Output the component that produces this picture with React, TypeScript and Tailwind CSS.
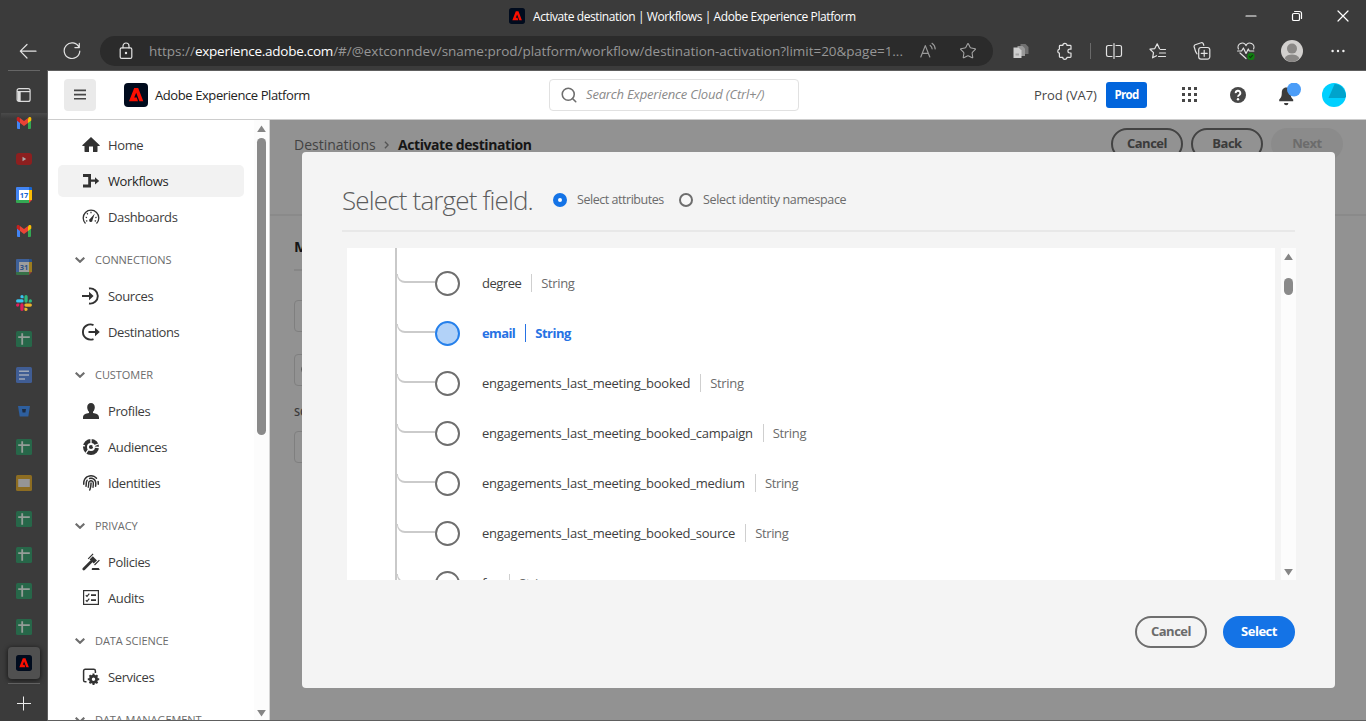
import type { ReactNode } from "react";
import { Search, Star } from "lucide-react";
import { FaFingerprint } from "react-icons/fa6";

function AdobeMark({ className }: { className: string }) {
  return (
    <svg viewBox="0 0 24 24" className={className}>
      <rect width="24" height="24" rx="4" fill="#000b1d" />
      <path d="M5 18.3 10.2 4.9h4L19.3 18.3h-3.9L12.2 9.8 10.2 14.6h2.6L14 18.3Z" fill="#fa0f00" />
    </svg>
  );
}

/* ---------- browser chrome ---------- */

function ToolIcon({ children, className = "w-[44px]" }: { children: ReactNode; className?: string }) {
  return <span className={`flex h-full shrink-0 items-center justify-center ${className}`}>{children}</span>;
}

function Line({ children, className = "size-[18px]" }: { children: ReactNode; className?: string }) {
  return (
    <svg viewBox="0 0 18 18" className={className} fill="none" stroke="currentColor" strokeWidth="1.2" strokeLinecap="round" strokeLinejoin="round">
      {children}
    </svg>
  );
}

function TitleBar() {
  return (
    <div className="flex h-8 shrink-0 items-center text-white">
      <div className="flex w-[1228px] items-center gap-2 pl-[509px]">
        <AdobeMark className="size-4" />
        <span className="whitespace-nowrap pt-px text-[12px] tracking-[-0.41px]">
          Activate destination | Workflows | Adobe Experience Platform
        </span>
      </div>
      <ToolIcon className="w-[46px]">
        <Line><path d="M4 9h10" /></Line>
      </ToolIcon>
      <ToolIcon className="w-[46px]">
        <Line>
          <rect x="4.5" y="6.5" width="7" height="7" rx="1.3" />
          <path d="M6.6 4.5h4.9a2 2 0 0 1 2 2v4.9" />
        </Line>
      </ToolIcon>
      <ToolIcon className="w-[46px]">
        <Line><path d="m4 4 10 10M14 4 4 14" /></Line>
      </ToolIcon>
    </div>
  );
}

function AddressBar() {
  return (
    <div className="flex h-[38px] shrink-0 items-center text-[#e3e3e3]">
      <ToolIcon className="w-[56px]">
        <Line><path d="M17 9.2H1.5M8 2.5 1.3 9.2 8 16" /></Line>
      </ToolIcon>
      <ToolIcon className="w-[32px]">
        <Line><path d="M16 5.2A7.8 7.8 0 1 0 16.8 9M16.3 1.4v4.2h-4.4" /></Line>
      </ToolIcon>
      <div className="ml-3 flex h-[30px] w-[893px] items-center rounded-full bg-[#2b2b2b]">
        <ToolIcon className="w-[49px] pl-[3px]">
          <Line>
            <rect x="3.2" y="5.8" width="11.6" height="10.6" rx="1.5" />
            <path d="M6 5.8V4a3 3 0 0 1 6 0v1.8" />
            <circle cx="9" cy="11" r=".6" fill="currentColor" />
          </Line>
        </ToolIcon>
        <span className="w-[756px] shrink-0 whitespace-nowrap text-[13.5px] tracking-[-0.02px] text-[#969696]">
          https://<span className="tracking-[-0.25px] text-white">experience.adobe.com</span>
          /#/@extconndev/sname:prod/platform/workflow/destination-activation?limit=20&amp;page=1...
        </span>
        <ToolIcon className="w-[46px] text-[#9a9a9a]">
          <Line>
            <path d="M1.8 15 6.3 3.6 10.8 15M3.3 11.3h6M11.2 3.4c1.2.9 1.8 2 1.9 3.4M13 1.3c2 1.3 3 3.2 3.2 5.6" />
          </Line>
        </ToolIcon>
        <ToolIcon className="w-[34px] text-[#a6a6a6]">
          <Star className="size-[18px]" strokeWidth={1.4} />
        </ToolIcon>
      </div>
      <ToolIcon className="ml-[6px] w-[44px]">
        <svg viewBox="0 0 18 18" className="size-[18px]">
          <path d="M8.5 2h5L16.5 5v7h-8Z" fill="#707070" />
          <path d="M5.5 4h5l2.5 2.5V14H5.5Z" fill="#989898" />
          <path d="M1.5 5.5h5L9.5 8.5V16h-8Z" fill="#cfcfcf" />
          <path d="M3.5 11.5h3.5v2H3.500Z" fill="#a5a5a5" />
        </svg>
      </ToolIcon>
      <ToolIcon>
        <Line>
          <path d="M6.8 3.400a2.100 2.100 0 0 1 4.200 0h3.200c.5 0 .8.3.8.8v3h-1.200a1.900 1.900 0 0 0 0 3.800H15v3.500c0 .5-.3.800-.8.800H11a2.100 2.100 0 0 1-4.200 0H4.200a.8.8 0 0 1-.8-.8V11.200a2.100 2.100 0 0 1 0-4.100V4.200c0-.5.3-.8.8-.8Z" />
        </Line>
      </ToolIcon>
      <span className="ml-[3px] h-4 w-px bg-[#6a6a6a]" />
      <ToolIcon className="ml-[1px] w-[44px]">
        <Line>
          <path d="M7 3.5H3.2A1.7 1.7 0 0 0 1.5 5.2v7.6a1.7 1.7 0 0 0 1.7 1.7H7M11 3.5h3.8a1.7 1.7 0 0 1 1.7 1.7v7.6a1.7 1.7 0 0 1-1.7 1.7H11M9 1.5v15" />
        </Line>
      </ToolIcon>
      <ToolIcon>
        <Line>
          <path d="M10.5 6.8 8.2 1.8 5.8 6.600 1 7.200l3.500 3.400-.9 5.200 3.900-2.100M11.500 7.500h5M10.500 11h6M9.500 14.500h7" />
        </Line>
      </ToolIcon>
      <ToolIcon>
        <Line>
          <path d="M4 11.800C2.800 10.500 1.800 7.500 1.200 5a1.700 1.700 0 0 1 1-2.200l6-2a1.700 1.700 0 0 1 2.100 1l.5 1.600" />
          <path d="M8 5.500h6.500a2.300 2.300 0 0 1 2.300 2.300v7a2.300 2.300 0 0 1-2.300 2.300H8a2.300 2.300 0 0 1-2.300-2.300v-7A2.300 2.300 0 0 1 8 5.500Z" />
          <path d="M11.200 8.300v6M8.200 11.300h6" />
        </Line>
      </ToolIcon>
      <ToolIcon>
        <Line>
          <path d="M1.400 7A4 4 0 0 1 9 3.600 4 4 0 0 1 16.600 7M3 11l6 5.500M.6 9h4l1.800-3 2.600 5.500L11.300 7l1 2h4.500" />
          <circle cx="14" cy="14.500" r="3.700" fill="#107c10" stroke="none" />
          <path d="m12.500 14.600 1 1 2-2.200" stroke="#0b3d0b" />
        </Line>
      </ToolIcon>
      <ToolIcon className="w-[48px]">
        <svg viewBox="0 0 22 22" className="size-[22px]">
          <circle cx="11" cy="11" r="11" fill="#d2d0ce" />
          <circle cx="11" cy="8.600" r="5" fill="#8a8886" />
          <path d="M3.600 18.200c1.500-2.700 4.300-3.700 7.400-3.700s5.900 1 7.400 3.700A11 11 0 0 1 11 22a11 11 0 0 1-7.400-3.800Z" fill="#8a8886" />
        </svg>
      </ToolIcon>
      <ToolIcon className="w-[44px]">
        <svg viewBox="0 0 18 18" className="size-[18px]" fill="#f0f0f0">
          <circle cx="3.600" cy="9" r="1.200" /><circle cx="9" cy="9" r="1.200" /><circle cx="14.400" cy="9" r="1.200" />
        </svg>
      </ToolIcon>
    </div>
  );
}

/* ---------- vertical tabs ---------- */

function Gmail() {
  return (
    <svg viewBox="0 0 16 12" className="h-3 w-4">
      <path d="M1 2v9a1 1 0 0 0 1 1h2V4.500Z" fill="#4285f4" />
      <path d="M15 2v9a1 1 0 0 1-1 1h-2V4.500Z" fill="#34a853" />
      <path d="M12 1.500V6l3.300-2.600V1.600C15.300.2 13.700-.4 12.600.6Z" fill="#fbbc04" />
      <path d="M4 6V1L8 4l4-3v5L8 9Z" fill="#ea4335" />
      <path d="M.7 1.600v1.800L4 6V1.200L3.400.6C2.300-.4.700.2.700 1.600Z" fill="#c5221f" />
    </svg>
  );
}

function YouTube() {
  return (
    <svg viewBox="0 0 16 12" className="h-3 w-4">
      <rect width="16" height="12" rx="3" fill="#8d1f1f" />
      <path d="M6.500 3.800v4.400L10.200 6Z" fill="#a9a9a9" />
    </svg>
  );
}

function Calendar({ day, dim = false }: { day: string; dim?: boolean }) {
  return (
    <svg viewBox="0 0 16 16" className={dim ? "size-4 opacity-50" : "size-4"}>
      <path d="M1 0h12v3H3v10H0V1a1 1 0 0 1 1-1Z" fill="#4285f4" />
      <path d="M13 0h2a1 1 0 0 1 1 1v2h-3Z" fill="#1967d2" />
      <path d="M13 3h3v10h-3Z" fill="#fbbc04" />
      <path d="M0 13h13v3H1a1 1 0 0 1-1-1Z" fill="#34a853" />
      <path d="M13 13h3l-3 3Z" fill="#ea4335" />
      <path d="M3 3h10v10H3Z" fill="#fff" />
      <text x="8" y="10.800" textAnchor="middle" fontSize="7.500" fontWeight="700" fill="#1a67d2">{day}</text>
    </svg>
  );
}

function Slack() {
  return (
    <svg viewBox="0 0 16 16" className="size-4">
      <path d="M6 0a1.600 1.600 0 0 0 0 3.300h1.600V1.600A1.600 1.600 0 0 0 6 0ZM1.700 4.300a1.600 1.600 0 0 0 0 3.300H6a1.600 1.600 0 0 0 0-3.300Z" fill="#36c5f0" />
      <path d="M16 6a1.600 1.600 0 0 0-3.300 0v1.600h1.700A1.600 1.600 0 0 0 16 6Zm-4.300 0V1.700a1.600 1.600 0 0 0-3.300 0V6a1.600 1.600 0 0 0 3.300 0Z" fill="#2eb67d" />
      <path d="M10 16a1.600 1.600 0 0 0 0-3.300H8.400v1.700A1.600 1.600 0 0 0 10 16Zm0-4.300h4.300a1.600 1.600 0 0 0 0-3.300H10a1.600 1.600 0 0 0 0 3.300Z" fill="#ecb22e" />
      <path d="M0 10a1.600 1.600 0 0 0 3.300 0V8.400H1.700A1.600 1.600 0 0 0 0 10Zm4.300 0v4.300a1.600 1.600 0 0 0 3.300 0V10a1.600 1.600 0 0 0-3.300 0Z" fill="#e01e5a" />
    </svg>
  );
}

function Sheets() {
  return (
    <svg viewBox="0 0 16 16" className="size-4">
      <rect width="16" height="16" rx="1.500" fill="#276749" />
      <path d="M2.200 6.200h11.600M6.200 2.200v11.600" stroke="#959d98" strokeWidth="1.800" />
    </svg>
  );
}

function Docs() {
  return (
    <svg viewBox="0 0 16 16" className="size-4">
      <rect width="16" height="16" rx="1.500" fill="#405d94" />
      <path d="M3 4.300h10M3 8h10M3 12h6" stroke="#9ea7b8" strokeWidth="1.600" />
    </svg>
  );
}

function Bucket() {
  return (
    <svg viewBox="0 0 16 16" className="size-4">
      <path d="M2 3h12l-1.700 10.500H3.700Z" fill="#2e5f9e" />
      <path d="M6 6h4l-.6 3.600H6.600Z" fill="#1e2c40" />
    </svg>
  );
}

function Slides() {
  return (
    <svg viewBox="0 0 16 16" className="size-4">
      <rect width="16" height="16" rx="1.500" fill="#8d6d22" />
      <rect x="2.200" y="4" width="11.600" height="8" fill="#959595" />
    </svg>
  );
}

const tabs: ReactNode[] = [
  <YouTube />, <Calendar day="17" />, <Gmail />, <Calendar day="31" dim />, <Slack />, <Sheets />, <Docs />,
  <Bucket />, <Sheets />, <Slides />, <Sheets />, <Sheets />, <Sheets />, <Sheets />,
];

function TabStrip() {
  return (
    <div className="flex w-[47px] shrink-0 flex-col items-center pl-px text-[#dcdcdc]">
      <div className="flex h-[43px] w-full shrink-0 flex-col items-center">
        <span className="h-px w-8 shrink-0 bg-[#666]" />
        <span className="mt-4 flex h-4 shrink-0 items-center">
          <svg viewBox="0 0 16 16" className="size-4" fill="none" stroke="currentColor" strokeWidth="1.200">
            <rect x="1.100" y="1.600" width="13" height="12.800" rx="2" />
            <path d="M1 4.600h13" />
            <path d="M1.600 5v8.500c0 .5.300.8.800.8h2.300V5Z" fill="currentColor" stroke="none" />
          </svg>
        </span>
      </div>
      <div className="flex h-7 w-full shrink-0 items-center justify-center bg-linear-to-b from-[#4a4a4a] from-0% to-[#3b3b3b] to-20% pb-2"><Gmail /></div>
      {tabs.map((tab, i) => (
        <div key={i} className="flex h-9 shrink-0 items-center">{tab}</div>
      ))}
      <div className="mt-[2px] flex size-8 shrink-0 items-center justify-center rounded-[4px] bg-[#505050] shadow-[0_1px_4px_1px_rgba(0,0,0,0.5)]">
        <AdobeMark className="size-4" />
      </div>
      <span className="mt-1 h-px w-8 shrink-0 bg-[#606060]" />
      <span className="mt-[11px] flex h-4 items-center">
        <svg viewBox="0 0 16 16" className="size-4" stroke="#ececec" strokeWidth="1"><path d="M1 8.500h14M7.500 1.500v14" /></svg>
      </span>
    </div>
  );
}

/* ---------- application header ---------- */

function AppHeader() {
  return (
    <header className="flex h-[49px] shrink-0 items-center border-b border-[#cdcdcd] bg-white">
      <span className="ml-4 flex size-8 items-center justify-center rounded-[4px] bg-[#eaeaea]">
        <svg viewBox="0 0 12 11" className="mb-[2px] h-[11px] w-3" fill="#474747">
          <path d="M0 .500h12v1.700H0ZM0 4.700h12v1.700H0ZM0 8.900h12v1.700H0Z" />
        </svg>
      </span>
      <AdobeMark className="ml-7 size-6" />
      <span className="ml-[7px] w-[394px] whitespace-nowrap pt-px text-[13px] tracking-[-0.41px] text-[#222]">Adobe Experience Platform</span>
      <div className="flex h-8 w-[250px] items-center rounded-[4px] border border-[#e1e1e1] pl-[10px]">
        <Search className="size-[18px] text-[#6e6e6e]" strokeWidth={2.1} />
        <span className="ml-2 whitespace-nowrap text-[13px] tracking-[-0.17px] text-[#8a8a8a] italic">Search Experience Cloud (Ctrl+/)</span>
      </div>
      <span className="ml-[235px] w-[72px] whitespace-nowrap pt-px text-[13px] tracking-[-0.05px] text-[#474747]">Prod (VA7)</span>
      <span className="flex h-[26px] w-[41px] items-center justify-center rounded-[3px] bg-[#0265dc] text-[11.5px] font-bold tracking-[-0.7px] text-white">Prod</span>
      <svg viewBox="0 0 16 16" className="ml-[34px] size-4" fill="#474747">
        <path d="M1 0h3v3H1ZM7 0h3v3H7ZM13 0h3v3h-3ZM1 6h3v3H1ZM7 6h3v3H7ZM13 6h3v3h-3ZM1 12h3v3H1ZM7 12h3v3H7ZM13 12h3v3h-3Z" />
      </svg>
      <svg viewBox="0 0 16 16" className="ml-[33px] size-4">
        <circle cx="8" cy="8" r="8" fill="#474747" />
        <path d="M5.700 6.100a2.300 2.300 0 1 1 3.500 1.900c-.8.500-1.200.9-1.200 1.700" fill="none" stroke="#fff" strokeWidth="1.900" />
        <circle cx="8" cy="12.200" r="1.200" fill="#fff" />
      </svg>
      <svg viewBox="0 0 24 24" className="ml-[31px] size-6">
        <path d="M7 20h4.400a2.200 2.200 0 0 1-4.400 0ZM9.200 4.500c3 0 4.400 2.400 4.400 5.300 0 4 .9 5.200 2.600 6.700V18.300H2.200V16.500c1.700-1.500 2.600-2.700 2.600-6.700 0-2.900 1.400-5.300 4.400-5.300Z" fill="#3c3c3c" />
        <circle cx="17" cy="6.500" r="7" fill="#4b9df8" />
      </svg>
      <svg viewBox="0 0 24 24" className="ml-[21px] size-6">
        <circle cx="12" cy="12" r="12" fill="#00d0ff" />
        <path d="M6.500 15 12.600 1A12 12 0 0 1 24 13.500L22.800 15Z" fill="#00a3cc" />
      </svg>
    </header>
  );
}

/* ---------- side navigation ---------- */

function NavSvg({ children }: { children: ReactNode }) {
  return <svg viewBox="0 0 18 18" className="size-[18px] shrink-0" fill="#323232">{children}</svg>;
}

const icons: Record<string, ReactNode> = {
  Home: <NavSvg><path d="M9 .900 17.700 9.300c.2.300 0 .700-.4.700H15.500v5.500c0 .3-.2.500-.5.500h-4v-5.500H7V16H3c-.3 0-.5-.2-.5-.5V10H.7c-.4 0-.6-.4-.4-.7Z" /></NavSvg>,
  Workflows: <NavSvg><path d="M1 2h8v5.600h4V5.200L17.200 9 13 12.400v-2.600H9v5.700H1V12.600h5.200V4.900H1Z" /></NavSvg>,
  Dashboards: (
    <NavSvg>
      <path d="M3.500 15.500A7.800 7.800 0 1 1 14.500 15.500" fill="none" stroke="#323232" strokeWidth="1.300" />
      <path d="m12.800 5.500-2.300 6.600a1.700 1.700 0 1 1-2.400-1.300Z" />
      <path d="M9 3.700v1.500M5 5.200l.8 1.200M3.700 9.200l1.300.4M13.300 9.700l1.300-.3M4 13.200l1.300-.6M12.700 12.600l1.300.6" stroke="#323232" strokeWidth="1.200" />
    </NavSvg>
  ),
  Sources: (
    <NavSvg>
      <path d="M7 1.500a7.600 7.600 0 1 1 0 15" fill="none" stroke="#323232" strokeWidth="1.900" />
      <path d="M0 8h7V4.800L11.600 9 7 13.200V10H0Z" />
    </NavSvg>
  ),
  Destinations: (
    <NavSvg>
      <path d="M11.500 2A7.600 7.600 0 1 0 11.500 16" fill="none" stroke="#323232" strokeWidth="1.900" />
      <path d="M6.500 8H13V4.800L17.800 9 13 13.200V10H6.500Z" />
    </NavSvg>
  ),
  Profiles: <NavSvg><path d="M9 1c2.300 0 3.800 1.700 3.800 4.200 0 1.800-.7 3.600-1.800 4.600v1.300c3 .5 6 1.500 6 4.400V17H1v-1.500c0-2.900 3-3.900 6-4.400V9.800C5.900 8.800 5.200 7 5.200 5.200 5.200 2.700 6.700 1 9 1Z" /></NavSvg>,
  Audiences: (
    <NavSvg>
      <circle cx="9" cy="9" r="6" fill="none" stroke="#323232" strokeWidth="4" />
      <circle cx="9" cy="9" r="2.100" />
      <path d="M9 0v6M17.500 5.500 10.500 8.300M3.700 15.300l3.300-4.500M17.500 9.500l-5-.3M0 7.500l3 .4" stroke="#fff" strokeWidth="1.300" />
    </NavSvg>
  ),
  Identities: <FaFingerprint className="size-[18px] shrink-0 p-px text-[#323232]" />,
  Policies: (
    <NavSvg>
      <path d="M1.800 16 9 8.800" stroke="#323232" strokeWidth="2.700" strokeLinecap="round" />
      <path d="m10.800 3.200 4.200 4.200-3.200 3.200L7.600 6.400Z" />
      <path d="m6.200 5.800 4.900-4.900M12.500 12l4.900-4.900" stroke="#323232" strokeWidth="1.200" />
      <path d="M9.800 17v-1.200c0-.5.300-.8.800-.8h5.800c.5 0 .8.3.8.8l.6 1.200Z" />
    </NavSvg>
  ),
  Audits: (
    <NavSvg>
      <rect x="1.600" y="1.600" width="14.800" height="13.800" fill="none" stroke="#323232" strokeWidth="1.200" />
      <path d="M3.800 6.300 5 7.400 7.300 4.700M3.800 11.300 5 12.400l2.300-2.700" fill="none" stroke="#323232" strokeWidth="1.200" />
      <path d="M9 5.300h5v1.700H9ZM9 10.300h5V12H9Z" />
    </NavSvg>
  ),
  Services: (
    <NavSvg>
      <path d="M4.500 13.800H3.200A1.600 1.600 0 0 1 1.600 12.200V2.900A1.600 1.600 0 0 1 3.200 1.300h8.600a1.600 1.600 0 0 1 1.600 1.600V5" fill="none" stroke="#323232" strokeWidth="1.500" />
      <circle cx="11.500" cy="11.200" r="3.100" fill="none" stroke="#323232" strokeWidth="2.800" />
      <path d="M11.500 5.500v2M11.500 15v2M5.800 11.200h2M15.200 11.200h2M7.500 7.200l1.400 1.400M14.100 13.800l1.400 1.400M7.500 15.200l1.400-1.400M14.100 8.600l1.400-1.400" stroke="#323232" strokeWidth="2" />
    </NavSvg>
  ),
};

const sections: { title?: string; items: string[] }[] = [
  { items: ["Home", "Workflows", "Dashboards"] },
  { title: "CONNECTIONS", items: ["Sources", "Destinations"] },
  { title: "CUSTOMER", items: ["Profiles", "Audiences", "Identities"] },
  { title: "PRIVACY", items: ["Policies", "Audits"] },
  { title: "DATA SCIENCE", items: ["Services"] },
  { title: "DATA MANAGEMENT", items: [] },
];

function ArrowUp() {
  return <svg viewBox="0 0 10 8" className="h-[7px] w-[9px] shrink-0" fill="#858585"><path d="M5 0.500 10 8H0Z" /></svg>;
}
function ArrowDown() {
  return <svg viewBox="0 0 10 8" className="h-[7px] w-[9px] shrink-0" fill="#858585"><path d="M5 7.500 10 0H0Z" /></svg>;
}

function SideNav() {
  return (
    <aside className="flex w-[222px] shrink-0 overflow-hidden border-r border-[#d5d5d5] bg-white">
      <nav className="w-[206px] shrink-0 pt-[7px]">
        {sections.map((s) => (
          <div key={s.title ?? "top"}>
            {s.title && (
              <div className="flex h-[43px] items-center gap-[10px] pt-[7px] pl-[27px]">
                <svg viewBox="0 0 10 6" className="h-[6px] w-[10px]" fill="none" stroke="#6e6e6e" strokeWidth="2.100"><path d="m.700.700 4.300 4.100L9.300.700" /></svg>
                <span className="whitespace-nowrap text-[11px] tracking-[-0.05px] text-[#6b6b6b]">{s.title}</span>
              </div>
            )}
            {s.items.map((item) => (
              <div key={item} className="flex h-9 items-center pl-[10px]">
                <div className={`flex h-8 w-[186px] items-center gap-2 rounded-[5px] pl-6 ${item === "Workflows" ? "bg-[#f2f2f2] text-[#1f1f1f]" : "text-[#3c3c3c]"}`}>
                  {icons[item]}
                  <span className="pt-0.5 text-[13px] tracking-[-0.38px]">{item}</span>
                </div>
              </div>
            ))}
          </div>
        ))}
      </nav>
      <div className="flex w-[15px] shrink-0 flex-col items-center bg-[#fcfcfc] pt-[5px]">
        <ArrowUp />
        <span className="mt-[6px] h-[297px] w-[9px] shrink-0 rounded-full bg-[#8a8a8a]" />
        <span className="mt-auto mb-[3px] flex"><ArrowDown /></span>
      </div>
    </aside>
  );
}

/* ---------- page behind the dialog ---------- */

function Page() {
  return (
    <div className="h-full bg-[#929292]">
      <div className="flex h-[94px] items-start pt-2 pr-[23px] pl-6">
        <div className="flex h-8 items-center text-[14px]">
          <span className="w-[82px] text-[#424242]">Destinations</span>
          <svg viewBox="0 0 6 10" className="mt-px ml-[8px] h-[8px] w-[5px]" fill="none" stroke="#555" strokeWidth="1.700"><path d="m1 1 4 4-4 4" /></svg>
          <span className="ml-[9px] whitespace-nowrap font-bold tracking-[-0.42px] text-[#161616]">Activate destination</span>
        </div>
        <div className="ml-auto flex gap-2 text-[13px] font-bold tracking-[-0.5px] text-[#3b3b3b]">
          <span className="flex h-8 w-[72px] items-center justify-center rounded-full border-2 border-[#434343]">Cancel</span>
          <span className="flex h-8 w-[72px] items-center justify-center rounded-full border-2 border-[#434343]">Back</span>
          <span className="flex h-8 w-[72px] items-center justify-center rounded-full bg-[#8b8b8b] text-[#6c6c6c]">Next</span>
        </div>
      </div>
      <div className="border-t-2 border-[#8a8a8a] pt-[19px] pr-16 pl-6">
        <h2 className="h-[34px] text-[15px] font-bold text-[#161616]">Mapping</h2>
        <div className="h-[2px] bg-[#868686]" />
        <div className="mt-[29px] h-8 rounded-[4px] border border-[#7f7f7f]" />
        <div className="mt-[22px] flex h-8 items-center rounded-[4px] border border-[#7f7f7f] pl-[5px] text-[#3b3b3b]">
          <Search className="size-4" />
        </div>
        <div className="mt-[18px] h-[27px] text-[11px] font-semibold text-[#3b3b3b]">SOURCE FIELD</div>
        <div className="h-8 rounded-[4px] border border-[#7f7f7f]" />
      </div>
    </div>
  );
}

/* ---------- dialog ---------- */

const fields = [
  { name: "degree" },
  { name: "email", selected: true },
  { name: "engagements_last_meeting_booked" },
  { name: "engagements_last_meeting_booked_campaign" },
  { name: "engagements_last_meeting_booked_medium" },
  { name: "engagements_last_meeting_booked_source" },
  { name: "fax" },
];

function FieldRow({ name, selected }: { name: string; selected?: boolean }) {
  const nameTracking = selected ? "tracking-[-0.6px]" : name.length < 10 ? "tracking-[-0.5px]" : "tracking-[-0.24px]";
  return (
    <div className="flex h-[50px] shrink-0 items-center">
      <span className="mb-[9px] h-[9px] w-[38px] rounded-bl-[8px] border-b-2 border-l border-[#cbcbcb]" />
      <span className={`size-[25px] shrink-0 rounded-full border-2 ${selected ? "border-[#2680eb] bg-[#b2d2f8]" : "border-[#6e6e6e] bg-white"}`} />
      <span className={`ml-[22px] flex items-center whitespace-nowrap text-[13px] ${selected ? "font-bold text-[#2672e4]" : "text-[#3f3f3f]"}`}>
        <span className={`pt-0.5 ${nameTracking}`}>{name}</span>
        <span className={`mr-[9px] ml-[10px] h-[18px] w-px ${selected ? "bg-[#2672e4]" : "bg-[#cfcfcf]"}`} />
        <span className={selected ? "pt-0.5 tracking-[-0.5px]" : "pt-0.5 tracking-[-0.35px] text-[#6b6b6b]"}>String</span>
      </span>
    </div>
  );
}

function Dialog() {
  return (
    <div className="absolute top-8 left-8 flex h-[536px] w-[1033px] flex-col rounded-[4px] bg-[#f4f4f4] px-10">
      <div className="flex h-[80px] shrink-0 items-center border-b-2 border-[#e8e8e8] pt-[18px]">
        <h1 className="w-[211px] whitespace-nowrap text-[26px] font-light tracking-[-0.84px] text-[#5c5c5c]">Select target field.</h1>
        <span className="flex w-[126px] items-center text-[12.5px] text-[#6b6b6b]">
          <span className="size-[14px] shrink-0 rounded-full border-[5px] border-[#1473e6] bg-white" />
          <span className="ml-[10px] whitespace-nowrap tracking-[-0.46px]">Select attributes</span>
        </span>
        <span className="flex items-center text-[12.5px] text-[#6b6b6b]">
          <span className="size-[14px] shrink-0 rounded-full border-2 border-[#6e6e6e] bg-[#f8f8f8]" />
          <span className="ml-[10px] whitespace-nowrap tracking-[-0.33px]">Select identity namespace</span>
        </span>
      </div>
      <div className="mt-4 ml-[5px] flex h-[332px] shrink-0">
        <div className="flex w-[928px] shrink-0 overflow-hidden bg-white pl-12">
          <div className="h-full w-full overflow-hidden border-l-2 border-[#c9c9c9] pt-[10px]">
            {fields.map((f) => <FieldRow key={f.name} {...f} />)}
          </div>
        </div>
        <div className="ml-[6px] flex w-[15px] shrink-0 flex-col items-center bg-[#fcfcfc] pt-[5px] pb-1">
          <ArrowUp />
          <span className="mt-[18px] h-[17px] w-[9px] rounded-full bg-[#8a8a8a]" />
          <span className="mt-auto flex"><ArrowDown /></span>
        </div>
      </div>
      <div className="mt-9 flex shrink-0 justify-end gap-4 text-[13px] font-bold tracking-[-0.5px]">
        <button className="h-8 w-[72px] rounded-full border-2 border-[#6e6e6e] pb-px text-[#6b6b6b]">Cancel</button>
        <button className="h-8 w-[72px] rounded-full bg-[#1473e6] pb-px text-white">Select</button>
      </div>
    </div>
  );
}

export default function App() {
  return (
    <div className="flex h-[721px] w-[1366px] flex-col overflow-hidden bg-[#3b3b3b] font-['Open_Sans',sans-serif]">
      <TitleBar />
      <AddressBar />
      <div className="flex h-[651px] shrink-0 overflow-hidden">
        <TabStrip />
        <div className="flex min-w-0 flex-1 flex-col border-t border-b border-l border-[#5e5e5e]">
          <AppHeader />
          <div className="flex min-h-0 flex-1">
            <SideNav />
            <main className="relative h-full min-w-0 flex-1 overflow-hidden">
              <Page />
              <Dialog />
            </main>
          </div>
        </div>
      </div>
    </div>
  );
}
